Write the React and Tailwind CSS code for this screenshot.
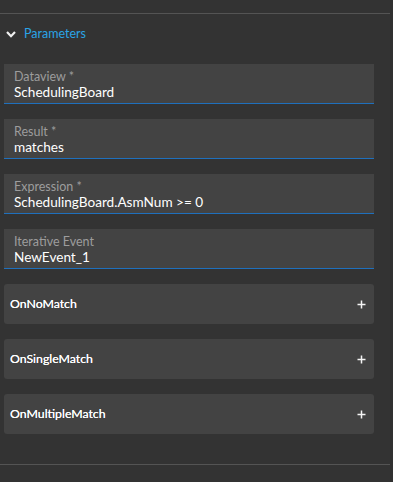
import React from "react";

const font = { fontFamily: "Lato, 'Open Sans', sans-serif" };

function Field({ label, value }) {
  return (
    <div className="h-[40px] w-[370px] bg-[#434343] flex flex-col">
      <div className="flex-1 px-[10px] pt-[5px]">
        <div className="text-[12.5px] leading-[15px] text-[#9d9d9d]">{label}</div>
        <div className="text-[13.6px] leading-[17px] text-white">{value}</div>
      </div>
      <div className="h-px bg-[#1f70bd]" />
    </div>
  );
}

function Event({ label }) {
  return (
    <div className="h-[40px] w-[370px] bg-[#434343] rounded-[3px] flex items-center justify-between pl-[6px] pr-[8px]">
      <span className="text-[12.3px] pt-px text-white [text-shadow:0_0_0.4px_#ffffff]">{label}</span>
      <svg width="9" height="9" viewBox="0 0 9 9">
        <path d="M4.5 0.5v8M0.5 4.5h8" stroke="#f4f4f4" strokeWidth="1.5" />
      </svg>
    </div>
  );
}

export default function App() {
  return (
    <div className="w-[393px] h-[482px] bg-[#333333] overflow-hidden flex" style={font}>
      <div className="w-[390px] flex flex-col">
        <div className="h-[13px]" />
        <div className="h-px bg-[#545454]" />
        <div className="h-[40px] flex items-center pl-[6px]">
          <svg width="10" height="7" viewBox="0 0 10 7" className="mr-[8px]">
            <path d="M1 1L5 5.2L9 1" stroke="#f0f0f0" strokeWidth="2.2" fill="none" />
          </svg>
          <span className="text-[12.5px] text-[#2aa4e6]">Parameters</span>
        </div>
        <div className="pl-[4px] pt-[10px] flex flex-col gap-[15px]">
          <Field label="Dataview *" value="SchedulingBoard" />
          <Field label="Result *" value="matches" />
          <Field label="Expression *" value="SchedulingBoard.AsmNum >= 0" />
          <Field label="Iterative Event" value="NewEvent_1" />
          <Event label="OnNoMatch" />
          <Event label="OnSingleMatch" />
          <Event label="OnMultipleMatch" />
        </div>
        <div className="h-[30px]" />
        <div className="h-px bg-[#545454]" />
      </div>
      <div className="flex-1 bg-[#303030]" />
    </div>
  );
}
